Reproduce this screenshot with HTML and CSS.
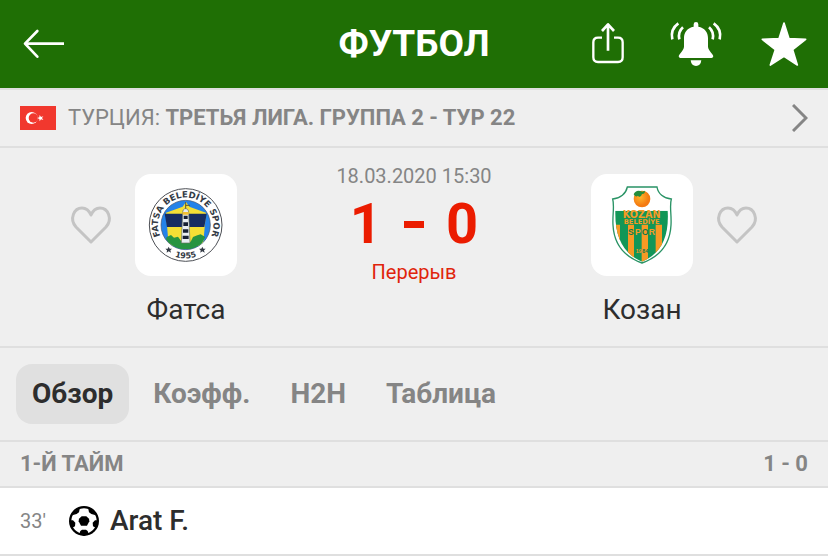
FILE: index.html
```html
<!DOCTYPE html>
<html lang="ru">
<head>
<meta charset="utf-8">
<meta name="viewport" content="width=device-width, initial-scale=1">
<title>Фатса - Козан</title>
<link rel="stylesheet" href="styles.css">
</head>
<body>
<header class="topbar">
  <button class="icon-button" type="button" aria-label="Назад">
    <svg class="icon" viewBox="42 42 180 180" fill="none" stroke="#fff" stroke-width="8"><path d="M192 131H75"/><path d="M112 93 75 131l37 39" stroke-linecap="round" stroke-linejoin="round"/></svg>
  </button>
  <h1 class="title">ФУТБОЛ</h1>
  <div class="actions">
    <button class="icon-button" type="button" aria-label="Поделиться">
      <svg class="icon" viewBox="54 42 180 180" fill="none" stroke="#fff" stroke-width="7" stroke-linejoin="round"><path d="M126 113H114Q100 113 100 127V172Q100 186 114 186H174Q188 186 188 172V127Q188 113 174 113H162"/><path d="M144 152V74M126 93l18-20 18 20" stroke-width="8"/></svg>
    </button>
    <button class="icon-button" type="button" aria-label="Уведомления">
      <svg class="icon" viewBox="318 42 180 180" fill="#fff"><path d="M401 80V73Q401 66 408 66T415 73V80C434 84 444 96 444 114V140Q444 147 458 164C462 170 458 174 453 174H363C358 174 354 170 358 164Q372 147 372 140V114C372 96 382 84 401 80Z"/><path d="M392 181H424Q422 198 408 198T392 181Z"/><path d="M369 82Q353 96 358 118M355 70Q330 88 337 118M447 82Q463 96 458 118M461 70Q486 88 479 118" fill="none" stroke="#fff" stroke-width="8"/></svg>
    </button>
    <button class="icon-button" type="button" aria-label="В избранное">
      <svg class="icon" viewBox="582 42 180 180" fill="#fff" stroke="#fff" stroke-width="5" stroke-linejoin="round"><path d="m672 69 15 47 50 2-39 31 14 46-40-26-41 26 15-46-39-31 50-2Z"/></svg>
    </button>
  </div>
</header>
<main>
  <a class="league" href="#league">
    <svg class="flag" viewBox="0 0 108 72" aria-hidden="true"><path fill="#f1382e" d="M0 0h108v72H0z"/><circle cx="35" cy="36" r="18" fill="#fff"/><circle cx="40" cy="36" r="14" fill="#f1382e"/><path fill="#fff" d="m51 36 7-2 1-7 4 6 7-2-4 5 4 6-7-2-4 6-1-7Z"/></svg>
    <span class="league-name">ТУРЦИЯ: <strong>ТРЕТЬЯ ЛИГА. ГРУППА 2 - ТУР 22</strong></span>
    <svg class="chevron" viewBox="0 0 16 28" fill="none" stroke="#858585" stroke-width="3" aria-hidden="true"><path d="m1 1 13 13L1 27"/></svg>
  </a>
  <section class="match">
    <button class="favorite" type="button" aria-label="Фатса в избранное">
      <svg class="heart" viewBox="0 0 44 44" fill="none" stroke="#c4c4c4" stroke-width="3" stroke-linejoin="round"><path d="M22 39 7 24C0 16 5 5 13 5q6 0 9 7 3-7 9-7c8 0 13 11 6 19Z"/></svg>
    </button>
    <div class="team">
      <div class="badge">
        <svg class="crest" viewBox="15 18 306 306" role="img" aria-label="Эмблема Фатса">
          <defs>
            <clipPath id="disc"><circle cx="167" cy="171" r="73"/></clipPath>
            <path id="arc-top" d="M108 230A83 83 0 1 1 226 230"/>
            <path id="arc-bottom" d="M96 242A101 101 0 0 0 238 242"/>
          </defs>
          <circle cx="167" cy="171" r="109" fill="#fff" stroke="#4c4f55" stroke-width="3"/>
          <circle cx="167" cy="171" r="74" fill="#2483e9" stroke="#45536b" stroke-width="2"/>
          <g clip-path="url(#disc)">
            <path fill="#f4df35" d="M108 134 158 116l10-14 10 14 50 18-9 100H116Z"/>
            <path fill="#172d61" d="M104 137h126l-7 40H111Z"/>
            <path fill="#279441" d="m110 207 13-6 9 8 12-3 10 14 28 1 7-14 13-5 10-3 14 8-20 36h-78l-23-18Z"/>
            <path fill="#e9eef2" stroke="#65705e" stroke-width="2" d="M158 135q0-13 9-13t9 13l4 90h-26Z"/>
            <path fill="#172033" d="M161 143h12v10h-12zM160 163h14v11h-14zM159 184h16v10h-16zM158 203h18v10h-18z"/>
            <path fill="#f2bf31" d="M158 132h18v8h-18z"/>
            <path stroke="#5c5835" stroke-width="3" d="M167 102v20m0-10h13"/>
          </g>
          <text class="crest-name"><textPath href="#arc-top" startOffset="50%" text-anchor="middle">FATSA BELEDİYE SPOR</textPath></text>
          <text class="crest-year"><textPath href="#arc-bottom" startOffset="50%" text-anchor="middle">1955</textPath></text>
          <path fill="#343b46" d="m116 236 3 6 7 0-5 5 2 7-7-4-6 4 1-7-5-5 7 0ZM217 236l3 6 7 0-5 5 2 7-7-4-6 4 1-7-5-5 7 0Z"/>
        </svg>
      </div>
      <h2 class="team-name">Фатса</h2>
    </div>
    <div class="summary">
      <time class="date" datetime="2020-03-18T15:30">18.03.2020 15:30</time>
      <div class="score"><span>1</span><span class="dash"></span><span>0</span></div>
      <p class="status">Перерыв</p>
    </div>
    <div class="team">
      <div class="badge">
        <svg class="crest" viewBox="15 18 306 306" role="img" aria-label="Эмблема Козан">
          <defs>
            <clipPath id="shield"><path d="M88 128H245C250 209 224 257 168 281 112 257 86 209 88 128Z"/></clipPath>
            <radialGradient id="orange" cx="40%" cy="40%"><stop offset="0" stop-color="#ffb52d"/><stop offset="1" stop-color="#f47b13"/></radialGradient>
          </defs>
          <path fill="#fff" stroke="#299365" stroke-width="4" d="M124 57H213C216 77 233 91 256 93 250 114 257 140 255 171 252 232 221 266 168 285 115 266 84 232 81 171 79 140 86 114 80 93 103 91 120 77 124 57Z"/>
          <g clip-path="url(#shield)">
            <path fill="#129657" d="M80 125h180v165H80z"/>
            <path fill="#f79a24" d="M80 170h22v100H80zM126 170h18v112h-18zM167 170h19v112h-19zM209 170h19v112h-19z"/>
          </g>
          <circle cx="168" cy="93" r="25" fill="url(#orange)"/>
          <path fill="#258d3d" d="M143 79q7-16 26-8l7-3q3 9-8 10-5 14-12 5-8 6-13-4Z"/>
          <g class="shield-text" text-anchor="middle">
            <text class="kozan" x="167" y="150">KOZAN</text>
            <text class="belediye" x="167" y="168">BELEDİYE</text>
            <text class="spor" y="200"><tspan class="on-stripe" x="135">S</tspan><tspan x="156">P</tspan><tspan class="on-stripe" x="177">O</tspan><tspan x="198">R</tspan></text>
            <text class="founded" y="255"><tspan x="154">1</tspan><tspan x="163">9</tspan><tspan class="on-stripe" x="173">8</tspan><tspan class="on-stripe" x="183">4</tspan></text>
          </g>
        </svg>
      </div>
      <h2 class="team-name">Козан</h2>
    </div>
    <button class="favorite" type="button" aria-label="Козан в избранное">
      <svg class="heart" viewBox="0 0 44 44" fill="none" stroke="#c4c4c4" stroke-width="3" stroke-linejoin="round"><path d="M22 39 7 24C0 16 5 5 13 5q6 0 9 7 3-7 9-7c8 0 13 11 6 19Z"/></svg>
    </button>
  </section>
  <nav class="tabs">
    <a class="tab active" href="#overview" aria-current="page">Обзор</a>
    <a class="tab" href="#odds">Коэфф.</a>
    <a class="tab" href="#h2h">H2H</a>
    <a class="tab" href="#table">Таблица</a>
  </nav>
  <section>
    <h3 class="period"><span>1-Й ТАЙМ</span><span>1 - 0</span></h3>
    <div class="event">
      <span class="minute">33'</span>
      <svg class="ball" viewBox="0 0 90 90" role="img" aria-label="Гол"><circle cx="45" cy="45" r="45"/><circle cx="45" cy="45" r="38" fill="#fff"/><path d="M10 29 14 18 25 8 32 9 30 19 23 24 12 27ZM80 29 76 18 65 8 58 9 60 19 67 24 78 27ZM3 43 12 43 19 50 18 61 10 65 3 55ZM87 43 78 43 71 50 72 61 80 65 87 55ZM31 84 34 75 39 71H51L56 75 59 84 45 89Z"/><path d="M38 31h14l8 7 1 8-7 13H36l-7-13 1-8Z"/></svg>
      <span class="player">Arat F.</span>
    </div>
  </section>
</main>
</body>
</html>
```
FILE: styles.css
```css
* {
  box-sizing: border-box;
}

body {
  margin: 0;
  background: #efefef;
  color: #2d2d2d;
  font-family: Roboto, "Liberation Sans", sans-serif;
}

h1, h2, h3, p {
  margin: 0;
}

a {
  color: inherit;
  text-decoration: none;
}

button {
  padding: 0;
  border: 0;
  background: none;
  cursor: pointer;
}

svg {
  display: block;
}

.topbar {
  display: grid;
  grid-template-columns: 1fr auto 1fr;
  align-items: center;
  background: #1f6f05;
  color: #fff;
}

.title {
  font-size: 37px;
  line-height: 44px;
  font-weight: 700;
}

.actions {
  display: flex;
  justify-content: flex-end;
}

.icon-button {
  display: flex;
  align-items: center;
  justify-content: center;
  width: 88px;
  height: 88px;
}

.icon {
  width: 60px;
  height: 60px;
}

.league {
  display: flex;
  align-items: center;
  gap: 12px;
  padding: 14px 20px;
  border-top: 2px solid #dfdfdf;
  border-bottom: 2px solid #dfdfdf;
  color: #858585;
  font-size: 22px;
  line-height: 28px;
}

.flag {
  width: 36px;
  height: 24px;
}

.league-name {
  flex: 1;
}

.chevron {
  width: 16px;
  height: 28px;
}

.match {
  display: grid;
  grid-template-columns: 58px 132px 1fr 132px 58px;
  align-items: start;
  padding: 26px 62px 18px;
  border-bottom: 2px solid #dfdfdf;
}

.favorite {
  display: flex;
  align-items: center;
  justify-content: center;
  height: 102px;
}

.heart {
  width: 44px;
  height: 44px;
}

.team {
  display: flex;
  flex-direction: column;
  align-items: center;
  gap: 16px;
}

.badge {
  width: 102px;
  border-radius: 16px;
  background: #fff;
}

.crest {
  width: 100%;
}

.crest-name,
.crest-year {
  fill: #343b46;
  font-family: "DejaVu Sans", sans-serif;
  font-weight: 700;
}

.crest-name {
  font-size: 26px;
}

.crest-year {
  font-size: 24px;
}

.shield-text {
  fill: #f79a24;
  font-family: "DejaVu Sans", sans-serif;
  font-weight: 700;
}

.kozan {
  font-size: 29px;
}

.belediye {
  font-size: 20px;
}

.spor {
  font-family: "Liberation Sans", sans-serif;
  font-size: 26px;
}

.founded {
  font-family: "Liberation Sans", sans-serif;
  font-size: 16px;
}

.on-stripe {
  fill: #12784a;
}

.team-name {
  font-size: 28px;
  line-height: 36px;
  font-weight: 400;
}

.summary {
  display: flex;
  flex-direction: column;
  align-items: center;
}

.date {
  color: #858585;
  font-size: 20px;
  line-height: 4px;
}

.score {
  display: flex;
  align-items: center;
  gap: 22px;
  padding: 16px 0;
  color: #eb1c00;
  font-size: 56px;
  line-height: 60px;
  font-weight: 700;
}

.dash {
  width: 20px;
  height: 7px;
  background: currentColor;
}

.status {
  color: #e0240b;
  font-size: 20px;
  line-height: 4px;
}

.tabs {
  display: flex;
  gap: 8px;
  padding: 16px;
  border-bottom: 2px solid #dfdfdf;
}

.tab {
  padding: 16px;
  border-radius: 16px;
  color: #858585;
  font-size: 28px;
  line-height: 28px;
  font-weight: 700;
}

.tab.active {
  background: #e0e0e0;
  color: #2d2d2d;
}

.period {
  display: flex;
  justify-content: space-between;
  padding: 8px 20px;
  border-bottom: 2px solid #dfdfdf;
  color: #858585;
  font-size: 22px;
  line-height: 28px;
  font-weight: 700;
}

.event {
  display: flex;
  align-items: center;
  padding: 16px 20px;
  border-bottom: 2px solid #dfdfdf;
  background: #fff;
  line-height: 34px;
}

.minute {
  width: 49px;
  color: #858585;
  font-size: 20px;
}

.ball {
  width: 30px;
  height: 30px;
  margin-right: 11px;
}

.player {
  font-size: 28px;
  font-weight: 500;
}
```
